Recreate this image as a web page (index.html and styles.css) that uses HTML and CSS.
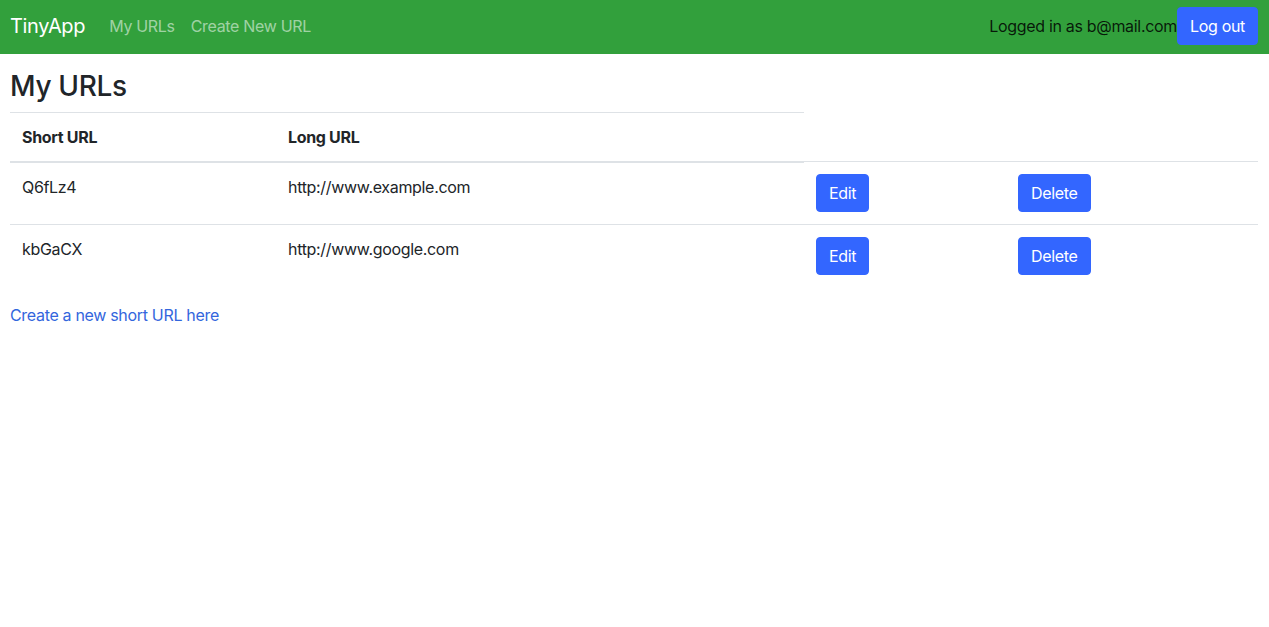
FILE: index.html
```html
<!DOCTYPE html>
<html lang="en">
<head>
<meta charset="utf-8">
<title>TinyApp</title>
<link rel="stylesheet" href="styles.css">
</head>
<body>
<nav class="navbar">
  <a class="brand" href="#">TinyApp</a>
  <div class="nav-links">
    <a class="nav-link" href="#">My URLs</a>
    <a class="nav-link" href="#">Create New URL</a>
  </div>
  <div class="nav-right">
    <span class="logged">Logged in as b@mail.com</span>
    <button class="btn">Log out</button>
  </div>
</nav>
<main class="content">
  <h3 class="title">My URLs</h3>
  <table class="table">
    <colgroup>
      <col class="c1"><col class="c2"><col class="c3"><col class="c4">
    </colgroup>
    <thead>
      <tr><th>Short URL</th><th>Long URL</th></tr>
    </thead>
    <tbody>
      <tr>
        <td>Q6fLz4</td>
        <td>http://www.example.com</td>
        <td><button class="btn">Edit</button></td>
        <td><button class="btn">Delete</button></td>
      </tr>
      <tr>
        <td>kbGaCX</td>
        <td>http://www.google.com</td>
        <td><button class="btn">Edit</button></td>
        <td><button class="btn">Delete</button></td>
      </tr>
    </tbody>
  </table>
  <a class="link" href="#">Create a new short URL here</a>
</main>
</body>
</html>
```
FILE: styles.css
```css
* { box-sizing: border-box; }
body {
  margin: 0;
  font-family: Inter, "Liberation Sans", Arial, sans-serif;
  font-size: 16px;
  line-height: 24px;
  letter-spacing: -0.02em;
  color: #212529;
  background: #fff;
}
.navbar {
  display: flex;
  align-items: center;
  height: 54px;
  padding: 7px 11px 9px 10px;
  background: #32a03c;
}
.brand {
  font-size: 20px;
  line-height: 30px;
  color: #fff;
  text-decoration: none;
  margin-right: 16px;
}
.nav-links { display: flex; }
.nav-link {
  color: rgba(255,255,255,.55);
  text-decoration: none;
  padding: 8px;
}
.nav-right {
  margin-left: auto;
  display: flex;
  align-items: center;
}
.logged { color: rgba(0,0,0,.85); }
.btn {
  font-family: inherit;
  font-size: 16px;
  line-height: 24px;
  letter-spacing: inherit;
  color: #fff;
  background: #3366ff;
  border: 1px solid #3366ff;
  border-radius: 4px;
  padding: 6px 12px;
  cursor: pointer;
}
.content { padding: 16px 11px 0 10px; }
.title {
  margin: 0 0 8px;
  font-size: 28px;
  line-height: 33.6px;
  font-weight: 500;
}
.table {
  width: 100%;
  table-layout: fixed;
  border-collapse: collapse;
  margin-bottom: 16px;
}
.c1 { width: 266px; }
.c2 { width: 528px; }
.c3 { width: 202px; }
.c4 { width: 252px; }
.table th, .table td {
  padding: 12px;
  text-align: left;
  vertical-align: top;
  border-top: 1px solid #dee2e6;
}
.table th { font-weight: 700; border-bottom: 2px solid #dee2e6; }
.link { color: #3366dd; text-decoration: none; }
```
